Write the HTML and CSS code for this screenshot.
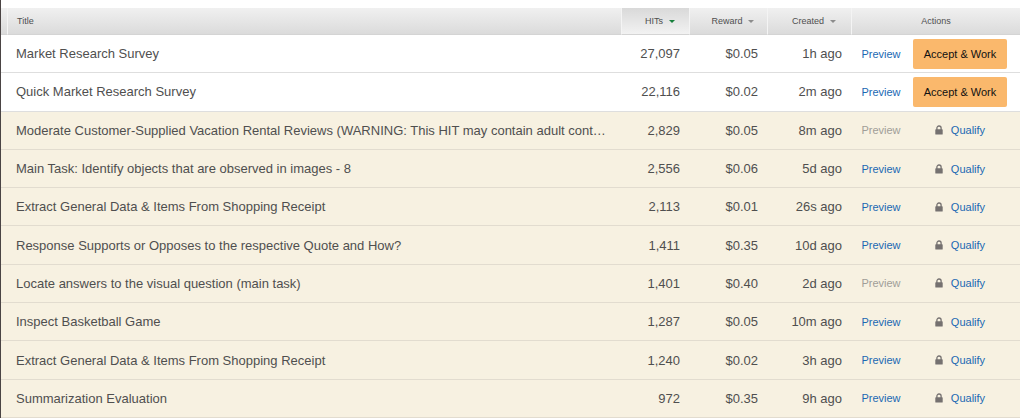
FILE: index.html
```html
<!DOCTYPE html>
<html lang="en">
<head>
  <meta charset="UTF-8">
  <meta name="viewport" content="width=device-width, initial-scale=1.0">
  <title>HIT Groups</title>
  <link rel="stylesheet" href="styles.css">
</head>
<body>
  <svg class="sprite" aria-hidden="true">
    <symbol id="lock" viewBox="0 0 8 10">
      <path d="M1.9 5V3.1a2.1 2.1 0 0 1 4.2 0V5" fill="none" stroke="currentColor" stroke-width="1.3"/>
      <rect x="0.3" y="4.3" width="7.4" height="5.2" rx="0.6" fill="currentColor"/>
    </symbol>
  </svg>

  <table class="hits">
    <colgroup>
      <col class="col-edge">
      <col>
      <col class="col-hits">
      <col class="col-reward">
      <col class="col-created">
      <col class="col-preview">
      <col class="col-work">
    </colgroup>
    <thead>
      <tr>
        <td></td>
        <th class="title" scope="col">Title</th>
        <th class="sorted" scope="col"><button class="sort">HITs</button></th>
        <th scope="col"><button class="sort">Reward</button></th>
        <th scope="col"><button class="sort">Created</button></th>
        <th scope="colgroup" colspan="2">Actions</th>
      </tr>
    </thead>
    <tbody>
      <tr>
        <td></td>
        <td class="title">Market Research Survey</td>
        <td>27,097</td>
        <td>$0.05</td>
        <td>1h ago</td>
        <td class="preview"><a href="#">Preview</a></td>
        <td class="work"><button class="accept">Accept &amp; Work</button></td>
      </tr>
      <tr>
        <td></td>
        <td class="title">Quick Market Research Survey</td>
        <td>22,116</td>
        <td>$0.02</td>
        <td>2m ago</td>
        <td class="preview"><a href="#">Preview</a></td>
        <td class="work"><button class="accept">Accept &amp; Work</button></td>
      </tr>
      <tr class="locked">
        <td></td>
        <td class="title">Moderate Customer-Supplied Vacation Rental Reviews (WARNING: This HIT may contain adult content)</td>
        <td>2,829</td>
        <td>$0.05</td>
        <td>8m ago</td>
        <td class="preview"><span class="disabled">Preview</span></td>
        <td class="work"><span class="qualify"><svg class="lock" aria-hidden="true"><use href="#lock"/></svg><a href="#">Qualify</a></span></td>
      </tr>
      <tr class="locked">
        <td></td>
        <td class="title">Main Task: Identify objects that are observed in images - 8</td>
        <td>2,556</td>
        <td>$0.06</td>
        <td>5d ago</td>
        <td class="preview"><a href="#">Preview</a></td>
        <td class="work"><span class="qualify"><svg class="lock" aria-hidden="true"><use href="#lock"/></svg><a href="#">Qualify</a></span></td>
      </tr>
      <tr class="locked">
        <td></td>
        <td class="title">Extract General Data &amp; Items From Shopping Receipt</td>
        <td>2,113</td>
        <td>$0.01</td>
        <td>26s ago</td>
        <td class="preview"><a href="#">Preview</a></td>
        <td class="work"><span class="qualify"><svg class="lock" aria-hidden="true"><use href="#lock"/></svg><a href="#">Qualify</a></span></td>
      </tr>
      <tr class="locked">
        <td></td>
        <td class="title">Response Supports or Opposes to the respective Quote and How?</td>
        <td>1,411</td>
        <td>$0.35</td>
        <td>10d ago</td>
        <td class="preview"><a href="#">Preview</a></td>
        <td class="work"><span class="qualify"><svg class="lock" aria-hidden="true"><use href="#lock"/></svg><a href="#">Qualify</a></span></td>
      </tr>
      <tr class="locked">
        <td></td>
        <td class="title">Locate answers to the visual question (main task)</td>
        <td>1,401</td>
        <td>$0.40</td>
        <td>2d ago</td>
        <td class="preview"><span class="disabled">Preview</span></td>
        <td class="work"><span class="qualify"><svg class="lock" aria-hidden="true"><use href="#lock"/></svg><a href="#">Qualify</a></span></td>
      </tr>
      <tr class="locked">
        <td></td>
        <td class="title">Inspect Basketball Game</td>
        <td>1,287</td>
        <td>$0.05</td>
        <td>10m ago</td>
        <td class="preview"><a href="#">Preview</a></td>
        <td class="work"><span class="qualify"><svg class="lock" aria-hidden="true"><use href="#lock"/></svg><a href="#">Qualify</a></span></td>
      </tr>
      <tr class="locked">
        <td></td>
        <td class="title">Extract General Data &amp; Items From Shopping Receipt</td>
        <td>1,240</td>
        <td>$0.02</td>
        <td>3h ago</td>
        <td class="preview"><a href="#">Preview</a></td>
        <td class="work"><span class="qualify"><svg class="lock" aria-hidden="true"><use href="#lock"/></svg><a href="#">Qualify</a></span></td>
      </tr>
      <tr class="locked">
        <td></td>
        <td class="title">Summarization Evaluation</td>
        <td>972</td>
        <td>$0.35</td>
        <td>9h ago</td>
        <td class="preview"><a href="#">Preview</a></td>
        <td class="work"><span class="qualify"><svg class="lock" aria-hidden="true"><use href="#lock"/></svg><a href="#">Qualify</a></span></td>
      </tr>
    </tbody>
  </table>
</body>
</html>
```
FILE: styles.css
```css
* {
  box-sizing: border-box;
}
body {
  display: flex;
  min-height: 100vh;
  margin: 0;
  padding: 8px 4px 0 0;
  border-left: 1px solid #4a4444;
  background: #fff;
  color: #4f4f4f;
  font-family: "Liberation Sans", Arial, sans-serif;
  font-size: 13px;
}
.sprite {
  display: none;
}
.hits {
  width: 100%;
  height: calc(100vh - 8px);
  table-layout: fixed;
  border-collapse: separate;
  border-spacing: 0;
}
.col-edge { width: 7px; }
.col-hits { width: 68px; }
.col-reward { width: 78px; }
.col-created { width: 84px; }
.col-preview { width: 58px; }
.col-work { width: 110px; }

/* header */
thead tr {
  height: 27px;
  background: linear-gradient(#f0f0f0, #dadada);
}
thead td,
thead th {
  padding: 0;
  border-right: 1px solid #f4f4f4;
  border-bottom: 1px solid #d4d4d4;
  font-size: 9px;
  font-weight: normal;
}
thead .title {
  padding-left: 9px;
  text-align: left;
}
thead .sorted {
  background: linear-gradient(#d9d9d9, #f2f2f2);
}
thead th:last-child {
  border-right: 0;
}
.sort {
  display: flex;
  align-items: center;
  justify-content: center;
  gap: 6px;
  width: 100%;
  padding: 0 0 0 9px;
  border: 0;
  background: none;
  color: inherit;
  font: inherit;
  cursor: pointer;
}
.sort::after {
  content: "";
  border: 3px solid transparent;
  border-top-color: #8c8c8c;
  border-bottom: 0;
}
.sorted .sort::after {
  border-top-color: #17803c;
}

/* rows */
tbody td {
  height: 38px;
  padding: 0 10px 0 0;
  border-bottom: 1px solid #dedede;
  text-align: right;
  white-space: nowrap;
}
tbody .title {
  padding: 0 12px 0 8px;
  overflow: hidden;
  text-align: left;
  text-overflow: ellipsis;
}
.locked td {
  border-color: #e2dccf;
  background: #f7f1e1;
}
tbody .preview,
tbody .work {
  padding: 0;
  font-size: 11px;
  text-align: center;
}
tbody .work {
  padding-right: 10px;
}
a {
  color: #1b68b3;
  text-decoration: none;
}
.disabled {
  color: #a09d98;
}
.accept {
  width: 94px;
  height: 30px;
  padding: 0;
  border: 0;
  border-radius: 2px;
  background: #fab86c;
  color: #111;
  font: inherit;
  cursor: pointer;
}
.qualify {
  display: flex;
  align-items: center;
  justify-content: center;
  gap: 8px;
}
.lock {
  width: 8px;
  height: 10px;
  color: #757170;
}
```
